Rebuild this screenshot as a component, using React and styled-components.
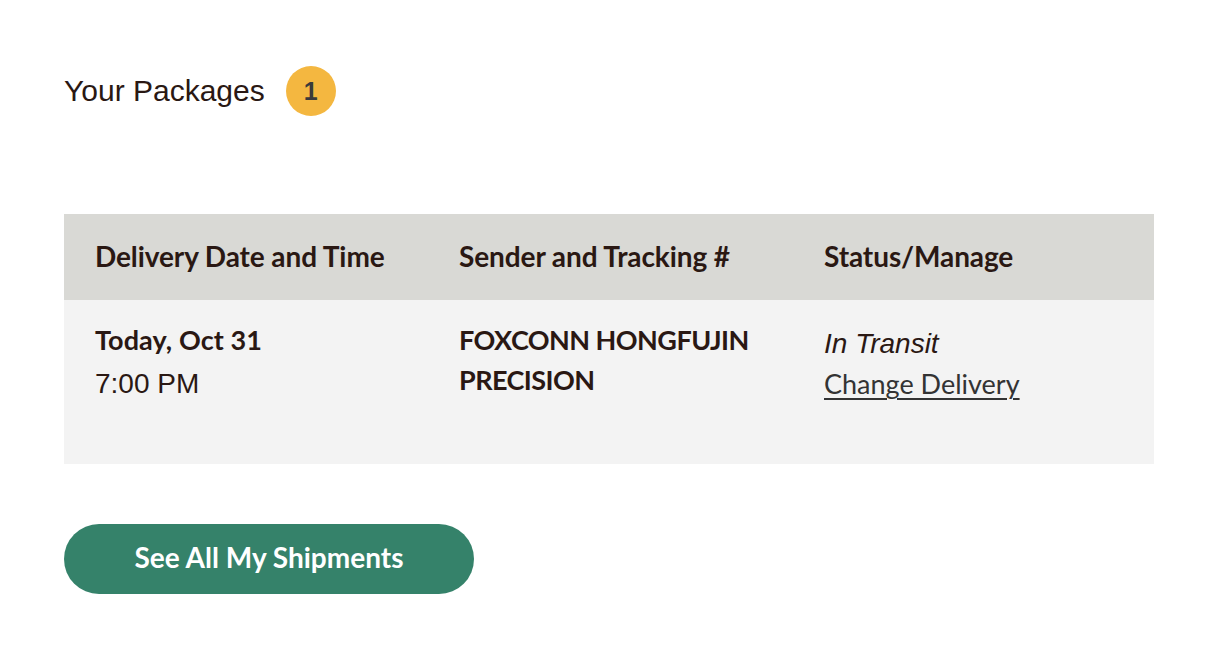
import React from "react";
import styled, { createGlobalStyle } from "styled-components";

const Global = createGlobalStyle`
  html, body { margin: 0; padding: 0; background: #ffffff; }
  body { font-family: "Liberation Sans", Arial, sans-serif; color: #2a1813; }
`;

const Page = styled.div`
  padding: 64px 68px 0 64px;
  display: flex;
  flex-direction: column;
`;

const TitleRow = styled.div`
  display: flex;
  align-items: center;
  gap: 21px;
  height: 54px;
`;

const Title = styled.h2`
  margin: 0;
  font-family: "Liberation Sans", Arial, sans-serif;
  font-weight: 400;
  font-size: 30px;
  color: #2a1813;
`;

const Badge = styled.span`
  width: 50px;
  height: 50px;
  border-radius: 50%;
  background: #f4b740;
  color: #3a3a3a;
  font-family: "Liberation Sans", Arial, sans-serif;
  font-weight: 700;
  font-size: 25px;
  display: flex;
  align-items: center;
  justify-content: center;
`;

const Table = styled.div`
  margin-top: 96px;
  width: 1090px;
  display: grid;
  grid-template-columns: 364px 365px 1fr;
`;

const HeadCell = styled.div`
  background: #d9d9d5;
  height: 86px;
  padding-left: 31px;
  padding-bottom: 2px;
  box-sizing: border-box;
  display: flex;
  align-items: center;
  font-family: Lato, "Open Sans", sans-serif;
  font-weight: 700;
  font-size: 28px;
  color: #2a1813;
  letter-spacing: -0.1px;
`;

const BodyCell = styled.div`
  background: #f3f3f3;
  height: 164px;
  box-sizing: border-box;
  padding: ${(p) => p.$top}px 0 0 31px;
  display: flex;
  flex-direction: column;
`;

const BoldLine = styled.div`
  font-family: Lato, "Open Sans", sans-serif;
  font-weight: 700;
  font-size: 27px;
  line-height: 40px;
  color: #2a1813;
  letter-spacing: ${(p) => (p.$caps ? "-0.55px" : "0.1px")};
`;

const PlainLine = styled.div`
  font-family: "Liberation Sans", Arial, sans-serif;
  font-size: 28px;
  line-height: 44px;
  margin-top: ${(p) => p.$gap || 0}px;
  color: #2a1813;
  font-style: ${(p) => (p.$italic ? "italic" : "normal")};
`;

const Link = styled.a`
  font-family: Lato, "Open Sans", sans-serif;
  font-size: 27px;
  line-height: 36px;
  color: #333333;
  text-decoration: underline;
  text-underline-offset: 4px;
  text-decoration-thickness: 2px;
  cursor: pointer;
  align-self: flex-start;
`;

const Button = styled.button`
  margin-top: 60px;
  width: 410px;
  height: 70px;
  padding: 0 0 4px;
  border: none;
  border-radius: 35px;
  background: #35826a;
  color: #ffffff;
  font-family: Lato, "Open Sans", sans-serif;
  font-weight: 700;
  font-size: 28px;
  cursor: pointer;
`;

export default function App() {
  return (
    <>
      <Global />
      <Page>
        <TitleRow>
          <Title>Your Packages</Title>
          <Badge>1</Badge>
        </TitleRow>
        <Table>
          <HeadCell>Delivery Date and Time</HeadCell>
          <HeadCell>Sender and Tracking #</HeadCell>
          <HeadCell>Status/Manage</HeadCell>
          <BodyCell $top={20}>
            <BoldLine>Today, Oct 31</BoldLine>
            <PlainLine $gap={2}>7:00 PM</PlainLine>
          </BodyCell>
          <BodyCell $top={20}>
            <BoldLine $caps>FOXCONN HONGFUJIN</BoldLine>
            <BoldLine $caps>PRECISION</BoldLine>
          </BodyCell>
          <BodyCell $top={22}>
            <PlainLine $italic>In Transit</PlainLine>
            <Link>Change Delivery</Link>
          </BodyCell>
        </Table>
        <div>
          <Button>See All My Shipments</Button>
        </div>
      </Page>
    </>
  );
}
